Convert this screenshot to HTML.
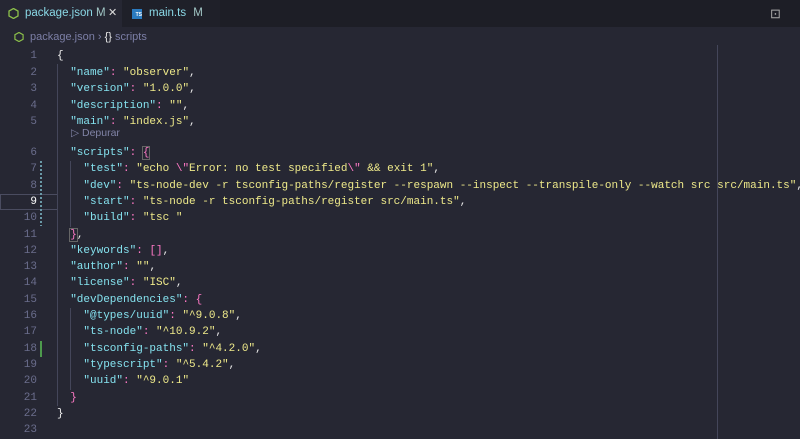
<!DOCTYPE html>
<html><head><meta charset="utf-8"><style>
*{margin:0;padding:0;box-sizing:border-box}
body{width:800px;height:439px;background:#262733;overflow:hidden;font-family:"Liberation Sans",sans-serif;position:relative}
.tabs{position:absolute;left:0;top:0;width:800px;height:27px;background:#1d1e26}
.tab{position:absolute;top:0;height:27px;font-size:11.5px;line-height:27px;color:#8ad8e6}
.t1{left:0;width:122px;background:#262733}
.t2{left:122px;width:98px;background:#1f2029}
.bc{position:absolute;top:29px;left:14px;font-size:11px;color:#7c7fa6;line-height:16px}
.code{position:absolute;left:0;top:48px;font-family:"Liberation Mono",monospace;font-size:11px}
.ln{position:absolute;left:0;width:37px;text-align:right;color:#6a6d8c;height:16.5px;line-height:16.5px}
.tx{position:absolute;left:57px;white-space:pre;color:#e8e8e8;height:16.5px;line-height:16.5px}
.k{color:#85e2ef}.s{color:#eee98a}.p{color:#ff79c6}.e{color:#ff79c6}.w{color:#f0f0f0}
.guide{position:absolute;width:1px;background:#44465a}
</style></head><body>
<div class="tabs">
 <div class="tab t1"><svg style="position:absolute;left:8px;top:8px" width="11" height="11" viewBox="0 0 11 11"><polygon points="5.5,0.5 10,3 10,8 5.5,10.5 1,8 1,3" fill="none" stroke="#8cc04a" stroke-width="1.3"/></svg><span style="position:absolute;left:25px;white-space:nowrap">package.json <span style="color:#a2c7c6">M</span></span><span style="position:absolute;left:108px;color:#ddd;font-size:11px">✕</span></div>
 <div class="tab t2"><span style="position:absolute;left:10px;top:9px;width:10px;height:10px;background:#2b7bc0;font-size:5px;line-height:12px;color:#fff;text-align:right;font-weight:bold">TS</span><span style="position:absolute;left:27px">main.ts <span style="color:#a2c7c6;margin-left:4px">M</span></span></div>
 <span style="position:absolute;left:770px;top:6px;color:#aaa;font-size:13px">⊡</span>
</div>
<div class="bc"><svg style="position:absolute;left:0;top:3px" width="10" height="10" viewBox="0 0 11 11"><polygon points="5.5,0.5 10,3 10,8 5.5,10.5 1,8 1,3" fill="none" stroke="#8cc04a" stroke-width="1.3"/></svg><span style="margin-left:16px">package.json</span> <span>›</span> <span style="color:#e8e8e8">{}</span> scripts</div>
<div class="guide" style="left:717px;top:45px;height:394px"></div>
<div class="guide" style="left:57px;top:64px;height:342px"></div>
<div class="guide" style="left:70px;top:161px;height:66px"></div>
<div class="guide" style="left:70px;top:308px;height:82px"></div>
<div style="position:absolute;left:0;top:194px;width:57px;height:16px;border:1px solid #4a4c60;border-right:none"></div>
<div style="position:absolute;left:40px;top:161px;width:2px;height:65px;background:repeating-linear-gradient(#6a9aa8 0 2px,transparent 2px 4px)"></div>
<div style="position:absolute;left:40px;top:341px;width:2px;height:16px;background:#4d9a4d"></div>
<div style="position:absolute;left:71px;top:127px;font-size:10.5px;color:#8083a6">▷ Depurar</div>
<div class="code">
<div class="ln" style="top:0">1</div><div class="tx" style="top:0"><span class="w">{</span></div>
<div class="ln" style="top:16.5px">2</div><div class="tx" style="top:16.5px">  <span class="k">"name"</span><span class="p">:</span> <span class="s">"observer"</span>,</div>
<div class="ln" style="top:33px">3</div><div class="tx" style="top:33px">  <span class="k">"version"</span><span class="p">:</span> <span class="s">"1.0.0"</span>,</div>
<div class="ln" style="top:49.5px">4</div><div class="tx" style="top:49.5px">  <span class="k">"description"</span><span class="p">:</span> <span class="s">""</span>,</div>
<div class="ln" style="top:66px">5</div><div class="tx" style="top:66px">  <span class="k">"main"</span><span class="p">:</span> <span class="s">"index.js"</span>,</div>
<div class="ln" style="top:97px">6</div><div class="tx" style="top:97px">  <span class="k">"scripts"</span><span class="p">:</span> <span class="p" style="outline:1px solid #666">{</span></div>
<div class="ln" style="top:113.3px">7</div><div class="tx" style="top:113.3px">    <span class="k">"test"</span><span class="p">:</span> <span class="s">"echo <span class="e">\"</span>Error: no test specified<span class="e">\"</span> &amp;&amp; exit 1"</span>,</div>
<div class="ln" style="top:129.6px">8</div><div class="tx" style="top:129.6px">    <span class="k">"dev"</span><span class="p">:</span> <span class="s">"ts-node-dev -r tsconfig-paths/register --respawn --inspect --transpile-only --watch src src/main.ts"</span>,</div>
<div class="ln" style="top:145.9px;color:#fff">9</div><div class="tx" style="top:145.9px">    <span class="k">"start"</span><span class="p">:</span> <span class="s">"ts-node -r tsconfig-paths/register src/main.ts"</span>,</div>
<div class="ln" style="top:162.2px">10</div><div class="tx" style="top:162.2px">    <span class="k">"build"</span><span class="p">:</span> <span class="s">"tsc "</span></div>
<div class="ln" style="top:178.5px">11</div><div class="tx" style="top:178.5px">  <span class="p" style="outline:1px solid #666">}</span>,</div>
<div class="ln" style="top:194.8px">12</div><div class="tx" style="top:194.8px">  <span class="k">"keywords"</span><span class="p">:</span> <span class="p">[]</span>,</div>
<div class="ln" style="top:211.1px">13</div><div class="tx" style="top:211.1px">  <span class="k">"author"</span><span class="p">:</span> <span class="s">""</span>,</div>
<div class="ln" style="top:227.4px">14</div><div class="tx" style="top:227.4px">  <span class="k">"license"</span><span class="p">:</span> <span class="s">"ISC"</span>,</div>
<div class="ln" style="top:243.7px">15</div><div class="tx" style="top:243.7px">  <span class="k">"devDependencies"</span><span class="p">:</span> <span class="p">{</span></div>
<div class="ln" style="top:260px">16</div><div class="tx" style="top:260px">    <span class="k">"@types/uuid"</span><span class="p">:</span> <span class="s">"^9.0.8"</span>,</div>
<div class="ln" style="top:276.3px">17</div><div class="tx" style="top:276.3px">    <span class="k">"ts-node"</span><span class="p">:</span> <span class="s">"^10.9.2"</span>,</div>
<div class="ln" style="top:292.6px">18</div><div class="tx" style="top:292.6px">    <span class="k">"tsconfig-paths"</span><span class="p">:</span> <span class="s">"^4.2.0"</span>,</div>
<div class="ln" style="top:308.9px">19</div><div class="tx" style="top:308.9px">    <span class="k">"typescript"</span><span class="p">:</span> <span class="s">"^5.4.2"</span>,</div>
<div class="ln" style="top:325.2px">20</div><div class="tx" style="top:325.2px">    <span class="k">"uuid"</span><span class="p">:</span> <span class="s">"^9.0.1"</span></div>
<div class="ln" style="top:341.5px">21</div><div class="tx" style="top:341.5px">  <span class="p">}</span></div>
<div class="ln" style="top:357.8px">22</div><div class="tx" style="top:357.8px"><span class="w">}</span></div>
<div class="ln" style="top:374.1px">23</div>
</div>
</body></html>
